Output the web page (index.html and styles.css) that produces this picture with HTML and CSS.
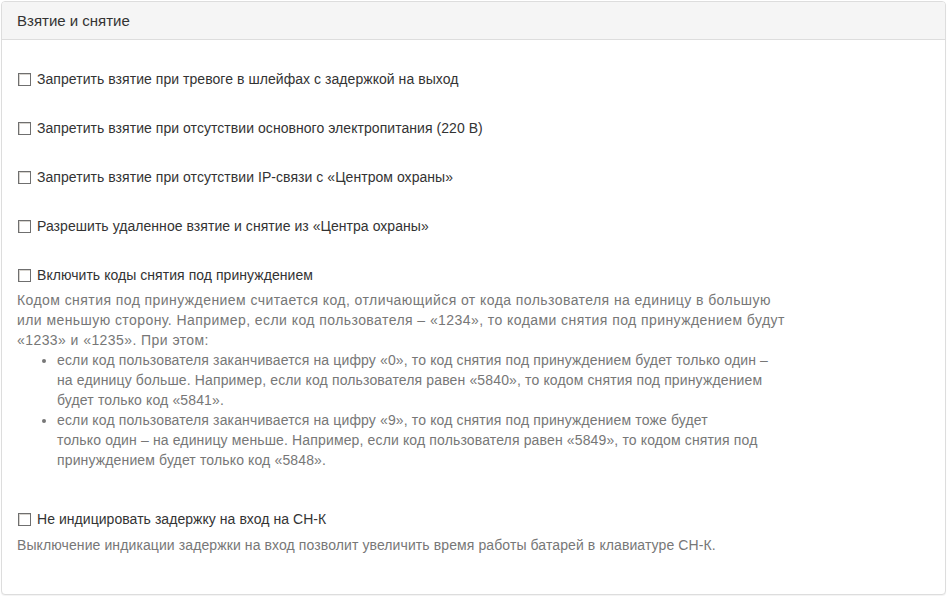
FILE: index.html
```html
<!DOCTYPE html>
<html lang="ru">
<head>
<meta charset="utf-8">
<title>Взятие и снятие</title>
<link rel="stylesheet" href="styles.css">
</head>
<body>
<div class="panel">
  <div class="panel-heading">Взятие и снятие</div>
  <div class="panel-body">
    <div class="option">
      <label class="check"><span class="box"></span>Запретить взятие при тревоге в шлейфах с задержкой на выход</label>
    </div>
    <div class="option">
      <label class="check"><span class="box"></span>Запретить взятие при отсутствии основного электропитания (220 В)</label>
    </div>
    <div class="option">
      <label class="check"><span class="box"></span>Запретить взятие при отсутствии IP-связи с «Центром охраны»</label>
    </div>
    <div class="option">
      <label class="check"><span class="box"></span>Разрешить удаленное взятие и снятие из «Центра охраны»</label>
    </div>
    <div class="option">
      <label class="check"><span class="box"></span>Включить коды снятия под принуждением</label>
      <div class="help help-with-list">
        <p class="help-text">Кодом снятия под принуждением считается код, отличающийся от кода пользователя на единицу в большую или меньшую сторону. Например, если код пользователя – «1234», то кодами снятия под принуждением будут «1233» и «1235». При этом:</p>
        <ul class="help-list">
          <li>если код пользователя заканчивается на цифру «0», то код снятия под принуждением будет только&nbsp;один&nbsp;– на единицу больше. Например, если код пользователя равен «5840», то кодом снятия под принуждением будет только код «5841».</li>
          <li>если код пользователя заканчивается на цифру «9», то код снятия под принуждением тоже будет только&nbsp;один&nbsp;– на единицу меньше. Например, если код пользователя равен «5849», то кодом снятия под принуждением будет только код «5848».</li>
        </ul>
      </div>
    </div>
    <div class="option">
      <label class="check"><span class="box"></span>Не индицировать задержку на вход на СН-К</label>
      <div class="help help-last"><p class="help-text">Выключение индикации задержки на вход позволит увеличить время работы батарей в клавиатуре СН-К.</p></div>
    </div>
  </div>
</div>
</body>
</html>
```

FILE: styles.css
```css
html, body {
  margin: 0;
  padding: 0;
  background: #ffffff;
}

body {
  font-family: "Liberation Sans", Arial, sans-serif;
  font-size: 14px;
  line-height: 20px;
  color: #333333;
  padding: 1px;
}

.panel {
  width: 945px;
  height: 594px;
  box-sizing: border-box;
  border: 1px solid #dddddd;
  border-radius: 4px;
  background: #ffffff;
  box-shadow: 0 1px 1px rgba(0, 0, 0, 0.05);
  display: flex;
  flex-direction: column;
}

.panel-heading {
  height: 38px;
  box-sizing: border-box;
  padding: 9px 15px 9px 15px;
  background: #f5f5f5;
  border-bottom: 1px solid #dddddd;
  border-radius: 3px 3px 0 0;
  font-size: 15px;
  line-height: 20px;
  color: #333333;
}

.panel-body {
  padding: 29px 15px 0 15px;
}

.option {
  margin-bottom: 29px;
}

.check {
  display: flex;
  align-items: center;
  gap: 6px;
  padding-left: 1px;
  color: #333333;
  letter-spacing: 0.05px;
}

.box {
  width: 13px;
  height: 13px;
  box-sizing: border-box;
  border: 1px solid #6f6f6f;
  background: #ffffff;
  box-shadow: inset 1px 1px 0 #d6d3ce;
  flex: none;
}

.help {
  margin-top: 5px;
  color: #777777;
}

.help-with-list {
  padding-bottom: 10px;
}

.help-text {
  margin: 0;
  max-width: 772px;
  letter-spacing: 0.43px;
}

.help-last {
  margin-top: 6px;
}

.help-last .help-text {
  max-width: none;
  letter-spacing: 0.1px;
}

.help-list {
  margin: 0;
  max-width: 722px;
  padding-left: 40px;
  letter-spacing: 0.14px;
}

.help-list li {
  padding: 0;
}
```
